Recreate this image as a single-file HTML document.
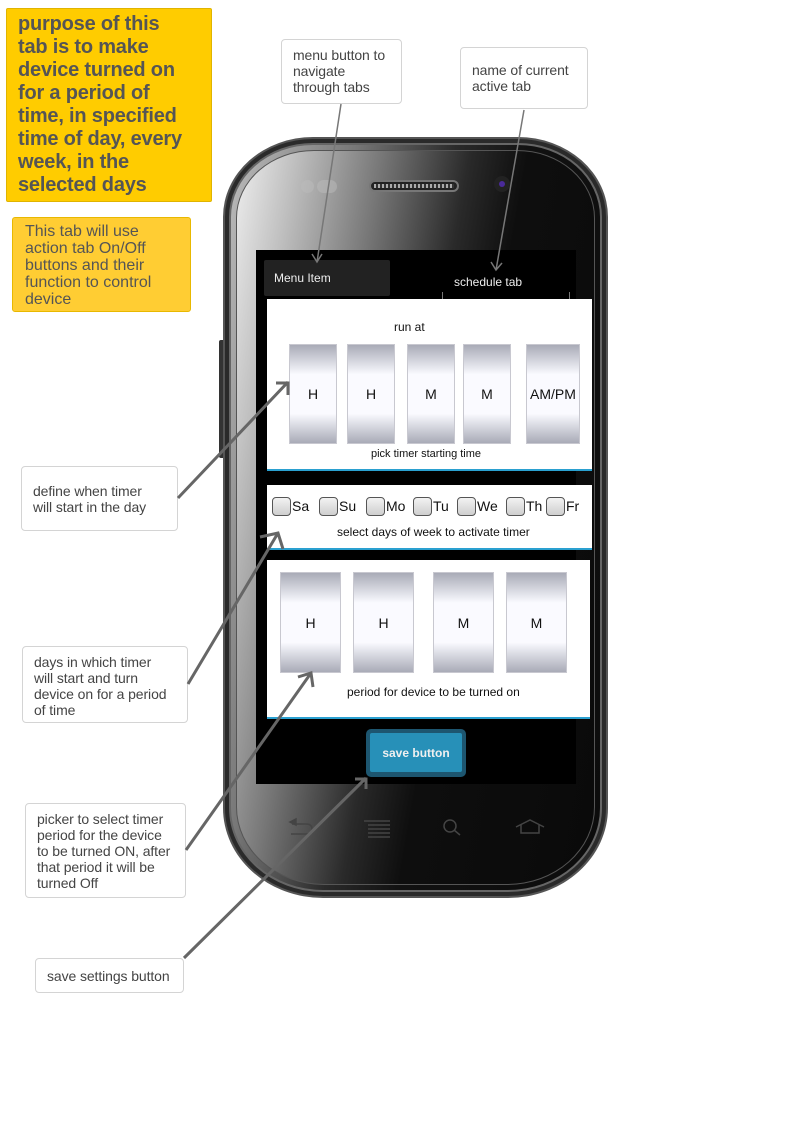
<!DOCTYPE html>
<html><head><meta charset="utf-8"><style>
*{margin:0;padding:0;box-sizing:border-box}
body{width:794px;height:1122px;background:#fff;position:relative;overflow:hidden;font-family:"Liberation Sans",sans-serif}
.a{position:absolute}
.note{position:absolute;background:#fff;border:1px solid #d4d4d4;border-radius:4px;color:#444;font-size:14px;line-height:16px;padding:7px 11px;white-space:nowrap;letter-spacing:-0.1px}
.pk{position:absolute;border:1px solid #c8c8d0;background:linear-gradient(#a9abb7 0%,#e4e5ec 22%,#fafaff 30%,#fafaff 70%,#e4e5ec 78%,#a9abb7 100%);display:flex;align-items:center;justify-content:center;font-size:14px;color:#111}
.cb{position:absolute;top:12px;width:19px;height:19px;border:1px solid #555;border-radius:4px;background:linear-gradient(#f2f2f2,#cfcfcf)}
.cl{position:absolute;top:13px;font-size:14px;color:#111}
</style></head><body>
<div class="a" style="left:6px;top:8px;width:206px;height:194px;background:#ffcc00;border:1px solid #e0b400;border-radius:2px;padding:4px 11px;font-weight:bold;font-size:20px;line-height:23px;color:#555;white-space:nowrap;letter-spacing:-0.2px">purpose of this<br>tab is to make<br>device turned on<br>for a period of<br>time, in specified<br>time of day, every<br>week, in the<br>selected days</div>
<div class="a" style="left:12px;top:217px;width:179px;height:95px;background:#ffcd33;border:1px solid #e8b800;border-radius:3px;padding:5px 12px;font-size:16px;line-height:17px;color:#555;white-space:nowrap">This tab will use<br>action tab On/Off<br>buttons and their<br>function to control<br>device</div>
<div class="note" style="left:281px;top:39px;width:121px;height:65px">menu button to<br>navigate<br>through tabs</div>
<div class="note" style="left:460px;top:47px;width:128px;height:62px;padding-top:14px">name of current<br>active tab</div>
<div class="note" style="left:21px;top:466px;width:157px;height:65px;padding-top:16px">define when timer<br>will start in the day</div>
<div class="note" style="left:22px;top:646px;width:166px;height:77px">days in which timer<br>will start and turn<br>device on for a period<br>of time</div>
<div class="note" style="left:25px;top:803px;width:161px;height:95px">picker to select timer<br>period for the device<br>to be turned ON, after<br>that period it will be<br>turned Off</div>
<div class="note" style="left:35px;top:958px;width:149px;height:35px;padding-top:9px">save settings button</div>

<!-- phone -->
<div class="a" style="left:219px;top:340px;width:6px;height:118px;background:#333;border-radius:2px"></div>
<div class="a" style="left:223px;top:137px;width:385px;height:761px;border-radius:90px 90px 100px 100px/80px 80px 90px 90px;background:#2a2a2a;border:2px solid #555"></div>
<div class="a" style="left:229px;top:143px;width:373px;height:749px;border-radius:84px 84px 94px 94px/74px 74px 84px 84px;background:linear-gradient(100deg,#bbb 0%,#777 25%,#2a2a2a 45%,#111 60%,#0c0c0c 100%);border:2px solid #666"></div>
<div class="a" style="left:236px;top:150px;width:359px;height:735px;border-radius:78px 78px 88px 88px/68px 68px 78px 78px;background:linear-gradient(100deg,#eee 0%,#c0c0c0 12%,#777 30%,#2a2a2a 48%,#0e0e0e 60%,#0a0a0a 100%);border:1px solid #555"></div>
<div class="a" style="left:369px;top:180px;width:90px;height:12px;border-radius:6px;background:#222;border:2px solid #777"></div>
<div class="a" style="left:374px;top:184px;width:80px;height:4px;background:repeating-linear-gradient(90deg,#aaa 0 2px,#333 2px 4px)"></div>
<div class="a" style="left:494px;top:176px;width:16px;height:16px;border-radius:50%;background:#222"></div>
<div class="a" style="left:499px;top:181px;width:6px;height:6px;border-radius:50%;background:#4a2a9a"></div>
<div class="a" style="left:301px;top:180px;width:13px;height:13px;border-radius:50%;background:#bbb;opacity:.5"></div>
<div class="a" style="left:317px;top:180px;width:20px;height:13px;border-radius:7px;background:#bbb;opacity:.5"></div>

<!-- screen -->
<div class="a" style="left:256px;top:250px;width:320px;height:534px;background:#000"></div>
<div class="a" style="left:264px;top:260px;width:126px;height:36px;background:#222;border-radius:2px;color:#eee;font-size:12px;padding:11px 10px">Menu Item</div>
<div class="a" style="left:442px;top:292px;width:128px;height:8px;border-left:1px solid #777;border-right:1px solid #777"></div>
<div class="a" style="left:454px;top:275px;color:#eee;font-size:12px">schedule tab</div>

<div class="a" style="left:267px;top:299px;width:325px;height:172px;background:#fff;border-bottom:2px solid #2aa0d0"></div>
<div class="a" style="left:394px;top:320px;font-size:12px;color:#111">run at</div>
<div class="pk" style="left:289px;top:344px;width:48px;height:100px">H</div>
<div class="pk" style="left:347px;top:344px;width:48px;height:100px">H</div>
<div class="pk" style="left:407px;top:344px;width:48px;height:100px">M</div>
<div class="pk" style="left:463px;top:344px;width:48px;height:100px">M</div>
<div class="pk" style="left:526px;top:344px;width:54px;height:100px">AM/PM</div>
<div class="a" style="left:371px;top:448px;font-size:11px;color:#111">pick timer starting time</div>

<div class="a" style="left:267px;top:485px;width:325px;height:65px;background:#fff;border-bottom:2px solid #2aa0d0">
<div class="cb" style="left:5px"></div><div class="cl" style="left:25px">Sa</div>
<div class="cb" style="left:52px"></div><div class="cl" style="left:72px">Su</div>
<div class="cb" style="left:99px"></div><div class="cl" style="left:119px">Mo</div>
<div class="cb" style="left:146px"></div><div class="cl" style="left:166px">Tu</div>
<div class="cb" style="left:190px"></div><div class="cl" style="left:210px">We</div>
<div class="cb" style="left:239px"></div><div class="cl" style="left:259px">Th</div>
<div class="cb" style="left:279px"></div><div class="cl" style="left:299px">Fr</div>
<div class="a" style="left:70px;top:40px;font-size:12px;color:#111">select days of week to activate timer</div>
</div>

<div class="a" style="left:267px;top:560px;width:323px;height:159px;background:#fff;border-bottom:2px solid #2aa0d0"></div>
<div class="pk" style="left:280px;top:572px;width:61px;height:101px">H</div>
<div class="pk" style="left:353px;top:572px;width:61px;height:101px">H</div>
<div class="pk" style="left:433px;top:572px;width:61px;height:101px">M</div>
<div class="pk" style="left:506px;top:572px;width:61px;height:101px">M</div>
<div class="a" style="left:347px;top:685px;font-size:12px;color:#111">period for device to be turned on</div>

<div class="a" style="left:366px;top:729px;width:100px;height:48px;background:#1d5670;border-radius:5px"></div>
<div class="a" style="left:370px;top:733px;width:92px;height:39px;background:#2790b8;border-radius:2px;color:#f0f0f0;font-weight:bold;font-size:12px;text-align:center;line-height:40px">save button</div>

<svg class="a" style="left:0;top:0" width="794" height="1122" viewBox="0 0 794 1122">
<g stroke="#444" stroke-width="1.5" fill="none">
<path d="M292 824h14q6 0 6 5t-6 5h-15"/><path d="M290 822l6-3v6z" fill="#444"/>
<path d="M364 821h26M368 825h22M368 829h22M368 833h22M368 837h22"/>
<circle cx="450" cy="826" r="6"/><path d="M454 830l6 5"/>
<path d="M516 827l14-7 14 7M521 825v8h18v-8"/>
</g>
<g stroke="#777" stroke-width="1.5" fill="none">
<path d="M341 104L317 262M312 254l5 8 5-8"/>
<path d="M524 110L496 270M491 262l5 8 6-7"/>
</g>
<g stroke="#666" stroke-width="3" fill="none">
<path d="M178 498L288 382M276 383h12v12"/>
<path d="M188 684L278 533M260 537l18-4 5 16"/>
<path d="M186 850L311 673M298 677l13-4 2 14"/>
<path d="M184 958L366 778M355 779h11v10"/>
</g>
</svg>
</body></html>
